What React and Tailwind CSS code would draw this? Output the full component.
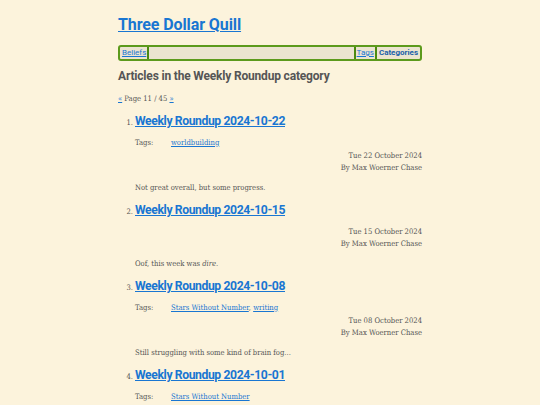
import React from "react";

const head = { fontFamily: 'Roboto, "Noto Sans", sans-serif' };
const body = { fontFamily: '"DejaVu Serif Condensed", "DejaVu Serif", serif' };

const items = [
  {
    n: 1,
    title: "Weekly Roundup 2024-10-22",
    tags: ["worldbuilding"],
    date: "Tue 22 October 2024",
    summary: <>Not great overall, but some progress.</>,
  },
  {
    n: 2,
    title: "Weekly Roundup 2024-10-15",
    tags: null,
    date: "Tue 15 October 2024",
    summary: (
      <>
        Oof, this week was <em>dire</em>.
      </>
    ),
  },
  {
    n: 3,
    title: "Weekly Roundup 2024-10-08",
    tags: ["Stars Without Number", "writing"],
    date: "Tue 08 October 2024",
    summary: <>Still struggling with some kind of brain fog...</>,
  },
  {
    n: 4,
    title: "Weekly Roundup 2024-10-01",
    tags: ["Stars Without Number"],
    date: "Tue 01 October 2024",
    summary: <>More progress.</>,
  },
];

function Item({ it }) {
  return (
    <li className="flex items-baseline mb-[8px]">
      <span className="w-[17px] shrink-0 text-right pr-[2px] text-[7.6px] text-[#555]" style={body}>
        {it.n}.
      </span>
      <div className="flex-1">
        <h3 className="text-[12.2px] leading-[16px] font-bold tracking-[-0.4px] mb-[8px]" style={head}>
          <a href="#" className="text-[#1976d2] underline">{it.title}</a>
        </h3>
        {it.tags && (
          <div className="flex text-[7.6px] leading-[12px] text-[#555] mb-[1px]" style={body}>
            <span className="w-[36px]">Tags:</span>
            <span>
              {it.tags.map((t, i) => (
                <React.Fragment key={t}>
                  {i > 0 && ", "}
                  <a href="#" className="text-[#1976d2] underline">{t}</a>
                </React.Fragment>
              ))}
            </span>
          </div>
        )}
        <div className="text-right text-[7.6px] leading-[12px] text-[#555]" style={body}>
          <div>{it.date}</div>
          <div>By Max Woerner Chase</div>
        </div>
        <p className="mt-[8px] text-[7.6px] leading-[12px] text-[#555]" style={body}>{it.summary}</p>
      </div>
    </li>
  );
}

export default function App() {
  return (
    <div className="h-[405px] bg-[#fcf3dc] overflow-hidden">
      <div className="w-[304px] mx-auto pt-[13px]">
        <h1 className="text-[16px] leading-[24px] font-bold tracking-[-0.1px]" style={head}>
          <a href="#" className="text-[#1976d2] underline">Three Dollar Quill</a>
        </h1>
        <nav
          className="mt-[8px] flex h-[16px] border-2 border-[#5c9a1c] rounded-[3px] bg-[#ebe4d0] text-[8px] leading-[12px] px-[2px]"
          style={head}
        >
          <a href="#" className="text-[#1976d2] underline pr-[1px] border-r-2 border-[#4a8a10]">Beliefs</a>
          <div className="flex-1" />
          <a href="#" className="text-[#1976d2] underline px-[1px] border-l-2 border-r-2 border-[#4a8a10]">Tags</a>
          <span className="font-bold text-[#1a5fa8] pl-[2px]">Categories</span>
        </nav>
        <h2 className="mt-[7px] text-[12px] leading-[16px] font-bold tracking-[-0.18px] text-[#555]" style={head}>
          Articles in the Weekly Roundup category
        </h2>
        <div className="mt-[9px] text-[7.6px] leading-[12px] text-[#555]" style={body}>
          <a href="#" className="text-[#1976d2] underline">«</a> Page 11 / 45{" "}
          <a href="#" className="text-[#1976d2] underline">»</a>
        </div>
        <ol className="mt-[8px]">
          {items.map((it) => (
            <Item key={it.n} it={it} />
          ))}
        </ol>
      </div>
    </div>
  );
}
